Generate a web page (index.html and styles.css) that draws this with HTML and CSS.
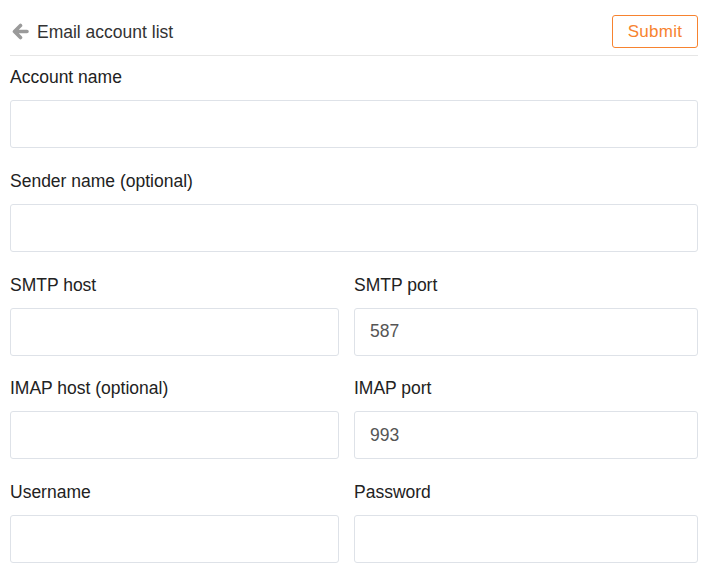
FILE: index.html
```html
<!DOCTYPE html>
<html>
<head>
<meta charset="utf-8">
<link rel="stylesheet" href="styles.css">
</head>
<body>
<div class="page">
  <header class="header">
    <a class="back">
      <svg class="back-icon" viewBox="0 0 18 17" width="18" height="17"><path d="M9.5 2.5 L3.5 8.5 L9.5 14.5 M3.5 8.5 H16" fill="none" stroke="#9a9a9a" stroke-width="3.6" stroke-linecap="round" stroke-linejoin="round"/></svg>
      <span class="back-text">Email account list</span>
    </a>
    <button class="submit">Submit</button>
  </header>
  <form class="form">
    <div class="field">
      <label class="label">Account name</label>
      <input class="input" type="text">
    </div>
    <div class="field">
      <label class="label">Sender name (optional)</label>
      <input class="input" type="text">
    </div>
    <div class="row">
      <div class="field">
        <label class="label">SMTP host</label>
        <input class="input" type="text">
      </div>
      <div class="field">
        <label class="label">SMTP port</label>
        <input class="input" type="text" value="587">
      </div>
    </div>
    <div class="row">
      <div class="field">
        <label class="label">IMAP host (optional)</label>
        <input class="input" type="text">
      </div>
      <div class="field">
        <label class="label">IMAP port</label>
        <input class="input" type="text" value="993">
      </div>
    </div>
    <div class="row">
      <div class="field">
        <label class="label">Username</label>
        <input class="input" type="text">
      </div>
      <div class="field">
        <label class="label">Password</label>
        <input class="input" type="password">
      </div>
    </div>
  </form>
</div>
</body>
</html>
```
FILE: styles.css
```css
* { box-sizing: border-box; }
html, body { margin: 0; background: #fff; }
body {
  font-family: "Liberation Sans", Arial, sans-serif;
  font-size: 17.5px;
  color: #222;
}
.page { padding: 0 14px 0 10px; }
.header {
  display: flex;
  align-items: center;
  justify-content: space-between;
  padding: 15px 0 7px;
  border-bottom: 1px solid #e6e6e6;
}
.back {
  display: flex;
  align-items: center;
  gap: 8px;
  padding-left: 1px;
  color: #333;
}
.back-icon { display: block; }
.back-text { line-height: 24px; }
.submit {
  height: 33px;
  width: 86px;
  padding: 0;
  background: #fff;
  border: 1px solid #f7832f;
  border-radius: 3px;
  color: #f7832f;
  font-family: inherit;
  font-size: 17px;
  letter-spacing: 0.3px;
}
.form { padding-top: 9px; }
.field { margin-bottom: 20.75px; display: flex; flex-direction: column; }
.label { display: block; line-height: 24px; margin-bottom: 11px; color: #222; }
.input {
  display: block;
  width: 100%;
  height: 48px;
  border: 1px solid #dee2e8;
  border-radius: 3px;
  padding: 0 15px;
  font-family: inherit;
  font-size: 17.5px;
  color: #555;
  background: #fff;
  outline: none;
}
.row {
  display: grid;
  grid-template-columns: 329px 1fr;
  column-gap: 15px;
}
```
